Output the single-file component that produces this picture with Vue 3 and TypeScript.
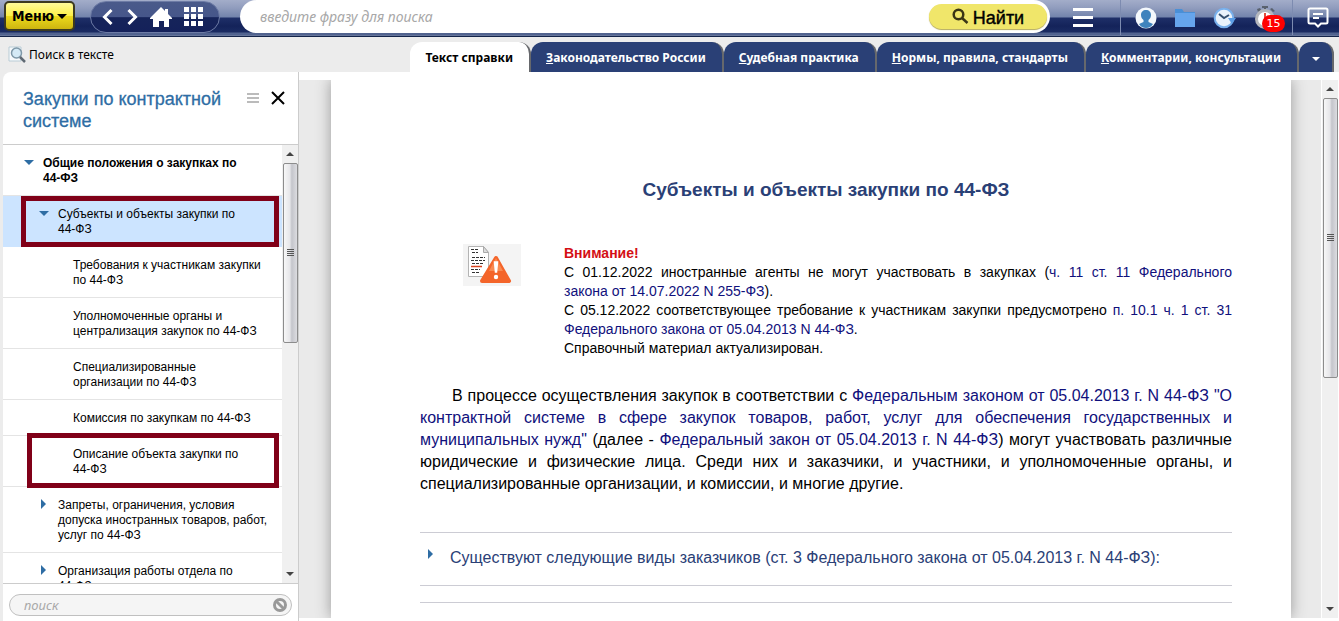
<script setup lang="ts">
import { ref } from 'vue'

interface TreeItem {
  text: string
  level: number
  arrow?: 'open' | 'shut'
  bold?: boolean
  selected?: boolean
  frame?: 'wide' | 'narrow'
}

const tree: TreeItem[] = [
  { text: 'Общие положения о закупках по\n44-ФЗ', level: 1, arrow: 'open', bold: true },
  { text: 'Субъекты и объекты закупки по\n44-ФЗ', level: 2, arrow: 'open', selected: true, frame: 'wide' },
  { text: 'Требования к участникам закупки\nпо 44-ФЗ', level: 3 },
  { text: 'Уполномоченные органы и\nцентрализация закупок по 44-ФЗ', level: 3 },
  { text: 'Специализированные\nорганизации по 44-ФЗ', level: 3 },
  { text: 'Комиссия по закупкам по 44-ФЗ', level: 3 },
  { text: 'Описание объекта закупки по\n44-ФЗ', level: 3, frame: 'narrow' },
  { text: 'Запреты, ограничения, условия\nдопуска иностранных товаров, работ,\nуслуг по 44-ФЗ', level: 2, arrow: 'shut' },
  { text: 'Организация работы отдела по\n44-ФЗ', level: 2, arrow: 'shut' },
]

const tabs = ['Законодательство России', 'Судебная практика', 'Нормы, правила, стандарты', 'Комментарии, консультации']

const query = ref('')
const treeQuery = ref('')
</script>

<template>
  <div class="page">
    <header class="topbar">
      <button class="menu" type="button">Меню<span class="caret"></span></button>
      <nav class="pill">
        <button type="button" aria-label="Назад">
          <svg width="12" height="18" viewBox="0 0 12 18"><path d="M9.500 2L2.500 9l7 7" /></svg>
        </button>
        <button type="button" aria-label="Вперёд">
          <svg width="12" height="18" viewBox="0 0 12 18"><path d="M2.500 2l7 7-7 7" /></svg>
        </button>
        <button type="button" aria-label="Домой">
          <svg class="solid" width="22" height="20" viewBox="0 0 22 20"><path d="M11 0l4 4V2h3v5l4 4v1h-3v8h-5v-6H9v6H3v-8H0v-1z" /></svg>
        </button>
        <button type="button" aria-label="Разделы">
          <svg class="solid" width="20" height="20" viewBox="0 0 20 20"><path d="M0 0h5v5H0zM7 0h5v5H7zM14 0h5v5h-5zM0 7h5v5H0zM7 7h5v5H7zM14 7h5v5h-5zM0 14h5v5H0zM7 14h5v5H7zM14 14h5v5h-5z" /></svg>
        </button>
      </nav>
      <form class="search" @submit.prevent>
        <input v-model="query" type="text" aria-label="Поиск" placeholder="введите фразу для поиска" />
        <button class="find" type="submit">
          <svg width="17" height="17" viewBox="0 0 17 17"><circle cx="6.500" cy="6.500" r="4.800" /><path d="M10 10l5.500 5" /></svg>
          <span>Найти</span>
        </button>
      </form>
      <button class="burger" type="button" aria-label="Список"><i></i><i></i><i></i></button>
      <div class="tools">
        <button type="button" aria-label="Профиль">
          <svg width="22" height="22" viewBox="0 0 22 22">
            <circle cx="11" cy="11" r="10.500" fill="#f4f8fc" />
            <path d="M11 3c3 0 5 2 5 5 0 2-1 4-2.500 5v2l4.500 2c-2 3-4.500 4-7 4s-5-1-7-4l4.500-2v-2C7 12 6 10 6 8c0-3 2-5 5-5z" fill="#3f83bd" />
          </svg>
        </button>
        <button type="button" aria-label="Папки">
          <svg width="22" height="20" viewBox="0 0 22 20"><path d="M1 1h7l2 3h11v15H1z" fill="#4a8fd6" /><path d="M1 5h20v14H1z" fill="#66a5ec" /></svg>
        </button>
        <button type="button" aria-label="История">
          <svg width="24" height="22" viewBox="0 0 24 22">
            <circle cx="11" cy="11" r="9.300" fill="#e9f2fb" stroke="#78b0ec" stroke-width="2" />
            <path d="M15 11h8l-4 6z" fill="#5c9ee6" />
            <path d="M6 7l5 4 5-3" fill="none" stroke="#35506f" stroke-width="2" />
          </svg>
        </button>
        <button class="timer" type="button" aria-label="Напоминания">
          <svg width="24" height="26" viewBox="0 0 24 26">
            <path d="M8 1h6v2H8zM10 3h2v3h-2zM3 4l3-1 1 2-3 2zM16 4l2-1 3 3-2 1z" fill="#59616e" />
            <circle cx="11" cy="14" r="8.500" fill="#fff" stroke="#b5b7bd" stroke-width="3" />
            <path d="M10 8h2v7h-2z" fill="#e24b3c" />
          </svg>
          <b>15</b>
        </button>
      </div>
      <button class="chat" type="button" aria-label="Сообщения">
        <svg width="22" height="21" viewBox="0 0 22 21"><path d="M3 1.500h16q1.500 0 1.500 1.500v12q0 1.500-1.500 1.500h-5l-3 3-3-3H3q-1.500 0-1.500-1.500V3q0-1.500 1.500-1.500zM6 7h10M6 11h6" /></svg>
      </button>
    </header>

    <div class="subbar">
      <button class="intext" type="button">
        <svg width="18" height="17" viewBox="0 0 18 17">
          <path d="M1 1h12v14H1z" fill="#f7fafc" stroke="#b9ccd6" />
          <circle cx="8.500" cy="7" r="5" fill="#d5eaf6" stroke="#7f98a8" stroke-width="1.500" />
          <path d="M12 11l5 5" stroke="#606a74" stroke-width="2.500" />
        </svg>
        <span>Поиск в тексте</span>
      </button>
      <nav class="tabs">
        <a class="tab active" href="#help">Текст справки</a>
        <a v-for="tab in tabs" :key="tab" class="tab" href="#tab"><u>{{ tab[0] }}</u>{{ tab.slice(1) }}</a>
        <button class="tab more" type="button" aria-label="Ещё"><span class="caret"></span></button>
      </nav>
    </div>

    <div class="body">
      <aside class="sidebar">
        <div class="side-head">
          <h2>Закупки по контрактной системе</h2>
          <button class="lines" type="button" aria-label="Вид"><i></i><i></i><i></i></button>
          <button class="close" type="button" aria-label="Закрыть">
            <svg width="14" height="14" viewBox="0 0 14 14"><path d="M1 1l12 12M13 1L1 13" /></svg>
          </button>
        </div>
        <div class="side-main">
          <ul class="tree">
            <li v-for="item in tree" :key="item.text" :class="['level' + item.level, { bold: item.bold, selected: item.selected }]">
              <span v-if="item.arrow" class="mark" :class="item.arrow"></span>
              <a href="#item">{{ item.text }}</a>
              <span v-if="item.frame" class="frame" :class="item.frame"></span>
            </li>
          </ul>
          <div class="scroll">
            <span class="up"></span>
            <div class="thumb side"><i></i><i></i><i></i><i></i></div>
            <span class="down"></span>
          </div>
        </div>
        <div class="side-foot">
          <div class="side-search">
            <input v-model="treeQuery" type="text" aria-label="Поиск по разделам" placeholder="поиск" />
            <button type="button" aria-label="Очистить">
              <svg width="14" height="14" viewBox="0 0 14 14"><circle cx="7" cy="7" r="5.500" /><path d="M3 3l8 8" /></svg>
            </button>
          </div>
        </div>
      </aside>

      <main class="viewer">
        <div class="desk">
          <article class="paper">
            <h1>Субъекты и объекты закупки по 44-ФЗ</h1>
            <section class="notice">
              <div class="pic">
                <svg width="58" height="42" viewBox="0 0 58 42">
                  <path d="M5.500 2.500h15l5 6v24h-20z" fill="#fff" stroke="#b4b4b4" />
                  <path d="M20.500 2.500v6h5z" fill="#ddd" stroke="#aaa" />
                  <path d="M8 5.500h8M9 8.500h6M9 13.500h13M8 16.500h14M9 19.500h11M8 25.500h9M9 28.500h7" stroke="#333" stroke-dasharray="3 1" />
                  <path d="M8 22.500h11" stroke="#d8431f" stroke-width="1.500" />
                  <path d="M33 14L46 37H19z" fill="#f4652a" stroke="#f4652a" stroke-width="4" stroke-linejoin="round" />
                  <path d="M33 14L40 27H26z" fill="#f98a52" />
                  <path d="M31.500 18h3l-1 10h-1z" fill="#fff" stroke="#fff" stroke-width="1.500" /><circle cx="33" cy="33" r="2.200" fill="#fff" />
                </svg>
              </div>
              <div class="notice-text">
                <strong>Внимание!</strong>
                <p>С 01.12.2022 иностранные агенты не могут участвовать в закупках (<a href="#l1">ч. 11 ст. 11 Федерального закона&nbsp;от 14.07.2022 N 255-ФЗ</a>).</p>
                <p>С 05.12.2022 соответствующее требование к участникам закупки предусмотрено <a href="#l2">п. 10.1 ч. 1 ст. 31 Федерального закона от 05.04.2013 N 44-ФЗ</a>.</p>
                <p>Справочный материал актуализирован.</p>
              </div>
            </section>
            <p class="lead">В процессе осуществления закупок в соответствии с <a href="#l3">Федеральным законом от 05.04.2013 г. N 44-ФЗ "О контрактной системе в сфере закупок товаров, работ, услуг для обеспечения государственных и муниципальных нужд"</a> (далее - <a href="#l4">Федеральный закон от 05.04.2013 г. N 44-ФЗ</a>) могут участвовать различные юридические и физические лица. Среди них и заказчики, и участники, и уполномоченные органы, и специализированные организации, и комиссии, и многие другие.</p>
            <button class="fold" type="button"><span class="mark shut"></span><span>Существуют следующие виды заказчиков (ст. 3 Федерального закона от 05.04.2013 г. N 44-ФЗ):</span></button>
            <div class="next"></div>
          </article>
        </div>
        <div class="scroll">
          <span class="up"></span>
          <div class="thumb main"><i></i><i></i><i></i><i></i></div>
          <span class="down"></span>
        </div>
      </main>
    </div>
  </div>
</template>

<style>
body {
  margin: 0;
  background: #fff;
}
</style>

<style scoped>
.page {
  display: flex;
  flex-direction: column;
  height: 100vh;
  overflow: hidden;
  font-family: "Liberation Sans", Arial, sans-serif;
  font-size: 12px;
  color: #000;
}
.page *,
.page *::before {
  box-sizing: border-box;
}
button {
  padding: 0;
  border: 0;
  background: none;
  font: inherit;
  color: inherit;
  cursor: pointer;
}
svg {
  display: block;
}
a {
  color: inherit;
  text-decoration: none;
}
i {
  display: block;
}

.topbar {
  display: flex;
  flex: none;
  align-items: flex-start;
  height: 37px;
  border-bottom: 1px solid #14244a;
  background: linear-gradient(#a3adc9 0, #909cbd 8px, #7384ac 17px, #1f2f68 18px, #14235a 26px, #1a2b62 32px, #51638f 33px, #51638f 35px, #7c89a8 36px);
}
.menu {
  display: flex;
  align-items: center;
  justify-content: center;
  gap: 3px;
  width: 71px;
  height: 30px;
  margin: 1px 15px 0 4px;
  border: 2px solid #3c3a20;
  border-radius: 5px;
  background: linear-gradient(#fffb9a 0, #fdf04a 48%, #ecd91c 52%, #cdb510 100%);
  font: bold 14px "DejaVu Sans Condensed", "Noto Sans", sans-serif;
}
.caret {
  border: 5px solid transparent;
  border-top-color: currentColor;
  border-bottom: 0;
}
.pill {
  display: flex;
  align-items: center;
  gap: 12px;
  width: 130px;
  height: 32px;
  margin-top: 1px;
  padding: 0 13px 0 11px;
  border: 1px solid #6d7ba5;
  border-radius: 16px;
  background: linear-gradient(#4a5a8a 0, #46568a 50%, #16245a 52%, #14215a 100%);
}
.pill svg {
  fill: none;
  stroke: #fff;
  stroke-width: 3;
}
.pill .solid {
  fill: #fff;
  stroke: none;
}
.search {
  display: flex;
  flex: 1;
  align-items: center;
  min-width: 0;
  height: 33px;
  margin-left: 20px;
  padding: 0 3px 0 20px;
  border-radius: 17px;
  background: #fff;
}
.search input {
  flex: 1;
  min-width: 0;
  padding: 0;
  border: 0;
  outline: 0;
  background: none;
  font: italic 14px "Noto Sans", sans-serif;
}
input::placeholder {
  color: #a8a8a8;
  opacity: 1;
}
.find {
  display: flex;
  align-items: center;
  justify-content: center;
  gap: 4px;
  width: 118px;
  height: 25px;
  border-radius: 13px;
  background: #f0e66a;
  box-shadow: 0 1px 1px #b5ab5a;
  font-size: 18px;
  -webkit-text-stroke: 0.400px #000;
}
.find span {
  padding-top: 3px;
}
.find svg {
  fill: none;
  stroke: #3a3516;
  stroke-width: 2.500;
}
.burger {
  display: flex;
  flex-direction: column;
  gap: 5px;
  width: 20px;
  margin: 8px 27px 0 23px;
}
.burger i {
  height: 3px;
  background: #fff;
}
.tools {
  display: flex;
  align-items: center;
  gap: 17px;
  height: 35px;
  padding: 0 14px;
  border-left: 1px solid #7d8bb0;
}
.timer {
  position: relative;
}
.timer b {
  position: absolute;
  top: 10px;
  left: 8px;
  width: 23px;
  height: 17px;
  border-radius: 9px;
  background: #f00;
  color: #fff;
  font: 11px/17px "DejaVu Sans", sans-serif;
  text-align: center;
}
.chat {
  height: 35px;
  padding: 0 10px 0 14px;
  border-left: 1px solid #7d8bb0;
}
.chat svg {
  fill: none;
  stroke: #fff;
  stroke-width: 2;
}

.subbar {
  display: flex;
  flex: none;
  justify-content: space-between;
  height: 35px;
  padding-right: 5px;
  background: #ececec;
}
.intext {
  display: flex;
  align-items: center;
  gap: 3px;
  padding-left: 8px;
  font: 12px "Noto Sans", sans-serif;
}
.tabs {
  display: flex;
  align-items: flex-end;
}
.tab {
  height: 30px;
  padding: 0 16px 0 15px;
  border-right: 2px solid #66686c;
  border-radius: 12px 12px 0 0;
  background: #2a4076;
  color: #fff;
  font: bold 12px/32px "Noto Sans", sans-serif;
  white-space: nowrap;
}
.tab.active {
  background: #fff;
  color: #000;
}
.tab.more {
  width: 35px;
  padding: 0;
}
.more .caret {
  display: inline-block;
  border-width: 4px;
  border-bottom: 0;
  vertical-align: middle;
}

.body {
  display: flex;
  flex: 1;
  min-height: 0;
}
.sidebar {
  display: flex;
  flex: none;
  flex-direction: column;
  width: 299px;
  padding-left: 3px;
  border-right: 1px solid #ccc;
  background: #ececec;
}
.side-head {
  display: flex;
  flex: none;
  align-items: flex-start;
  height: 73px;
  padding: 16px 13px 0 20px;
  border-bottom: 1px solid #ccc;
  border-top-left-radius: 8px;
  background: #fff;
}
.side-head h2 {
  flex: 1;
  margin: 0;
  color: #2e6da4;
  font-size: 18px;
  font-weight: normal;
  line-height: 22px;
  -webkit-text-stroke: 0.300px #2e6da4;
}
.lines {
  display: flex;
  flex-direction: column;
  gap: 2px;
  width: 12px;
  margin: 5px 12px 0 0;
}
.lines i {
  height: 2px;
  background: #bbb;
}
.close {
  margin-top: 3px;
}
.close svg {
  fill: none;
  stroke: #000;
  stroke-width: 2;
}
.side-main {
  display: flex;
  flex: 1;
  min-height: 0;
  background: #fff;
}
.tree {
  flex: 1;
  min-width: 0;
  margin: 0;
  padding: 0;
  overflow: hidden;
  list-style: none;
}
.tree li {
  position: relative;
  display: flex;
  padding: 11px 8px 9px 70px;
  border-bottom: 1px solid #e4e4e4;
  line-height: 15px;
}
.tree .level1 {
  padding-left: 19px;
}
.tree .level2 {
  padding-left: 34px;
}
.tree a {
  white-space: pre;
}
.tree .bold {
  font-weight: bold;
}
.tree .selected {
  border-color: #cce4ff;
  background: #cce4ff;
}
.mark {
  flex: none;
  width: 21px;
  padding: 4px 0 0 2px;
}
.mark::before {
  display: block;
  width: 0;
  border: 5px solid transparent;
  content: "";
}
.mark.open::before {
  border-top-color: #2e6da4;
  border-bottom: 0;
}
.mark.shut {
  padding: 1px 0 0 4px;
}
.mark.shut::before {
  border-left-color: #2e6da4;
  border-right: 0;
}
.frame {
  position: absolute;
  top: 0;
  right: 3px;
  bottom: -1px;
  left: 18px;
  z-index: 1;
  border: 5px solid #800018;
}
.frame.narrow {
  top: -3px;
  bottom: -2px;
  left: 24px;
}
.scroll {
  display: flex;
  flex: none;
  flex-direction: column;
  align-items: center;
  width: 16px;
  background: #f0f0f0;
}
.up,
.down {
  flex: none;
  margin: 7px 0;
  border: 4px solid transparent;
}
.up {
  border-top: 0;
  border-bottom-color: #444;
}
.down {
  margin-top: auto;
  border-bottom: 0;
  border-top-color: #444;
}
.thumb {
  display: flex;
  flex-direction: column;
  align-items: center;
  justify-content: center;
  gap: 1px;
  width: 15px;
  border: 1px solid #8c8c8c;
  border-radius: 2px;
  background: linear-gradient(90deg, #f7f7f7, #e6e6e9 45%, #c4c5cb 60%, #dcdce0);
}
.thumb i {
  width: 7px;
  height: 1px;
  background: #555;
}
.thumb.side {
  height: 41%;
}
.thumb.main {
  height: 52%;
}
.side-foot {
  flex: none;
  height: 38px;
  padding: 10px 6px 0;
  border-top: 1px solid #ccc;
  background: #fff;
}
.side-search {
  display: flex;
  align-items: center;
  height: 22px;
  padding: 0 4px 0 14px;
  border: 1px solid #c0c0c0;
  border-radius: 11px;
  background: #f5f5f5;
}
.side-search input {
  flex: 1;
  min-width: 0;
  padding: 0;
  border: 0;
  outline: 0;
  background: none;
  font: italic 13px "Noto Sans", sans-serif;
}
.side-search svg {
  fill: none;
  stroke: #999;
  stroke-width: 3;
}

.viewer {
  display: flex;
  flex: 1;
  min-width: 0;
  padding: 8px 1px 3px 0;
}
.desk {
  flex: 1;
  min-width: 0;
  padding: 0 30px 0 32px;
  overflow: hidden;
  border-right: 1px solid #fff;
  background: #eaeaea;
}
.paper {
  height: 100%;
  padding: 98px 59px 0 89px;
  background: #fff;
  box-shadow: 0 0 14px #999;
}
h1 {
  margin: 0 0 42px;
  color: #2a4076;
  font-size: 19px;
  line-height: 24px;
  text-align: center;
}
.notice {
  display: flex;
  gap: 43px;
  padding-left: 43px;
  font-size: 14px;
  line-height: 19px;
  text-align: justify;
}
.pic {
  flex: none;
  align-self: flex-start;
  background: #f4f4f4;
}
.notice-text {
  flex: 1;
  min-width: 0;
}
.notice strong {
  display: block;
  color: #d40f14;
}
.notice p {
  margin: 0;
}
.paper a {
  color: #10107c;
}
.lead {
  margin: 27px 0 37px;
  font-size: 16px;
  line-height: 22px;
  text-align: justify;
  text-indent: 32px;
}
.fold {
  display: flex;
  width: 100%;
  height: 54px;
  padding: 15px 0 0 4px;
  border: solid #ccccd4;
  border-width: 1px 0;
  color: #2a4076;
  font-size: 16px;
  line-height: 20px;
  text-align: left;
}
.fold .mark {
  width: 26px;
}
.next {
  margin-top: 16px;
  border-top: 1px solid #ccccd4;
}
</style>
